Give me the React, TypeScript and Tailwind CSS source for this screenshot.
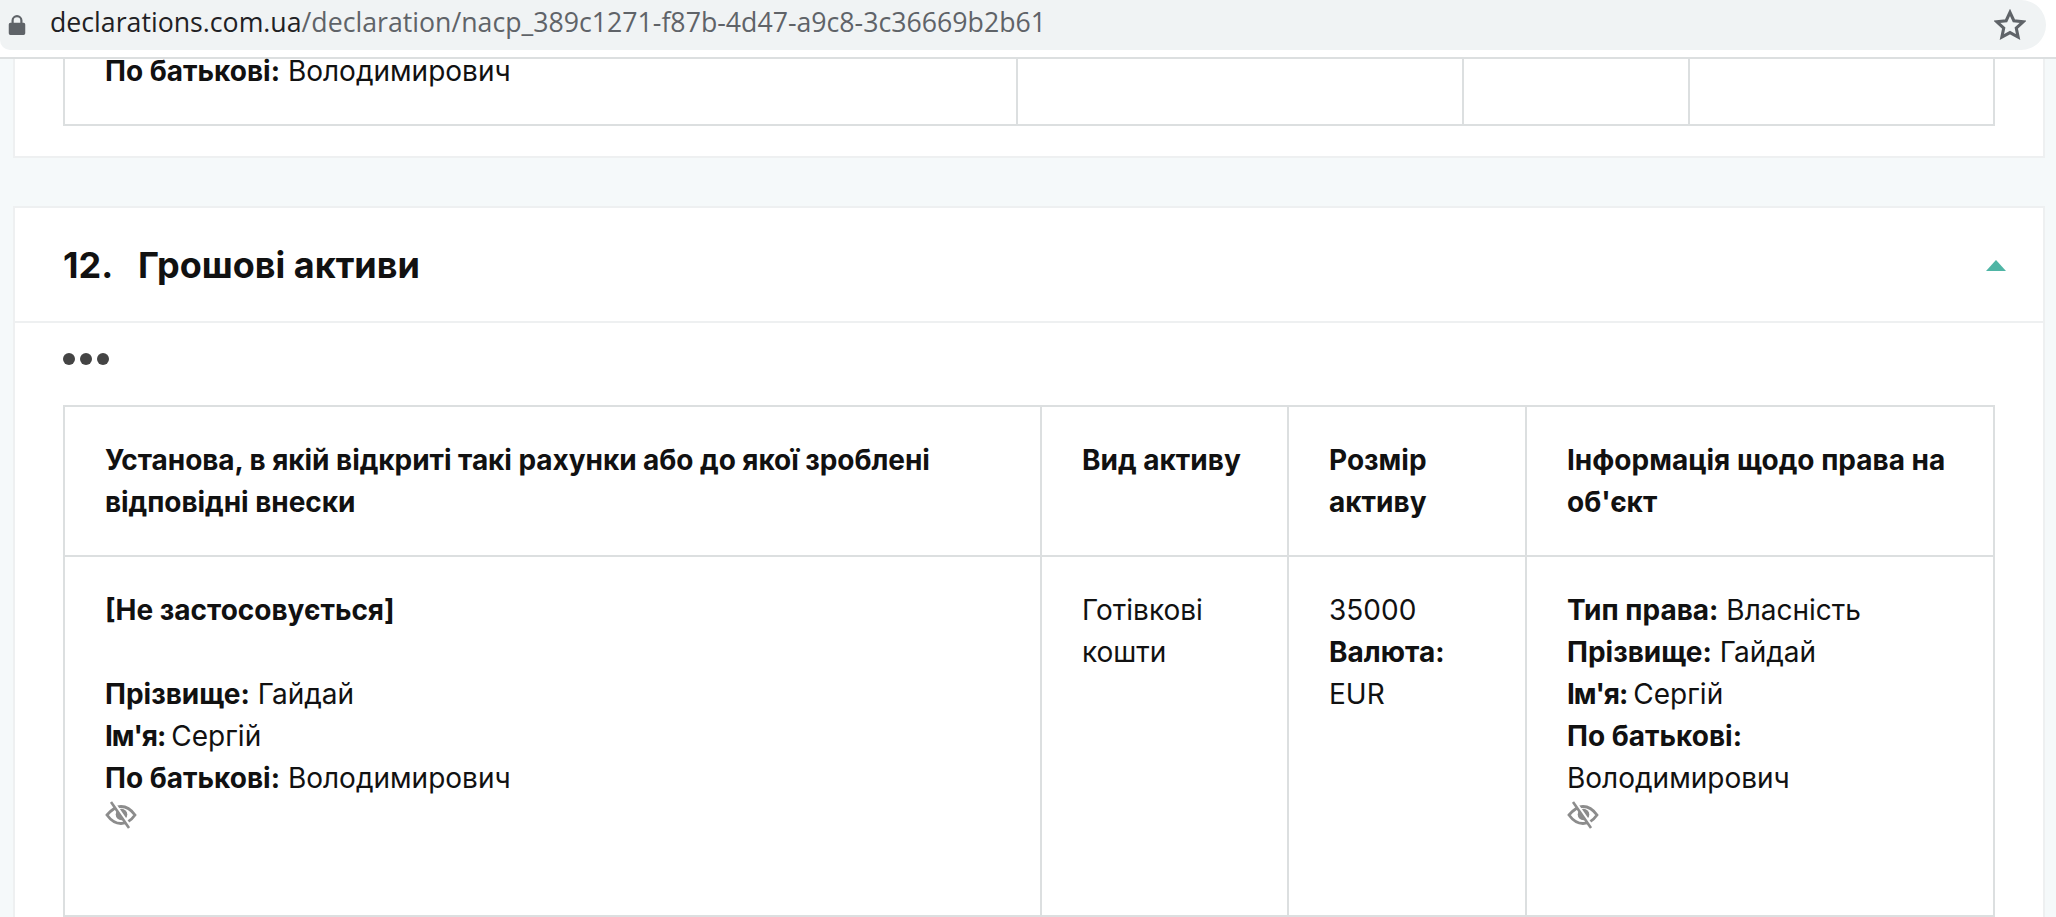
import React from "react";

const Eye = () => (
  <svg viewBox="0 0 32 28" className="block mt-[2px] w-[32px] h-[28px] text-[#8c8c8c]" fill="none" stroke="currentColor">
    <path d="M2 14 C8 7 13 5.500 16 5.500 C20 5.500 25 7 30 14 C25 21 20 22.500 16 22.500 C12 22.500 7 21 2 14 Z" strokeWidth="2.800" />
    <circle cx="16.500" cy="13.500" r="5.800" fill="currentColor" stroke="none" />
    <path d="M8 1 L26 27" strokeWidth="3.200" stroke="#ffffff" />
    <path d="M6 1 L24 27" strokeWidth="2.600" />
  </svg>
);

const Pair = ({ k, v }: { k: string; v: string }) => (
  <div><b className="font-bold">{k}</b> {v}</div>
);

const Name = () => (
  <div><b className="font-bold tracking-[-1px]">Ім'я:</b> <span className="-ml-[2px]">Сергій</span></div>
);

const cell = "border-2 border-[#dcdfe0] align-top";

export default function App() {
  return (
    <div className="h-[917px] w-[2056px] overflow-hidden bg-[#f5f9fa] text-[#111111] font-['Inter',sans-serif] text-[28px] leading-[42px]">
      <div className="h-[59px] bg-white border-b-2 border-[#dcdfe0]">
        <div className="h-[50px] w-[2046px] bg-[#f0f3f4] rounded-r-[25px] rounded-bl-[10px] flex items-center pl-[8px] pr-[20px]">
          <svg viewBox="0 0 16 20" className="w-[18px] h-[22px] text-[#5f6368]" fill="currentColor">
            <path d="M3 8V6a5 5 0 0 1 10 0v2h1a1.500 1.500 0 0 1 1.500 1.500v8A1.500 1.500 0 0 1 14 19H2a1.500 1.500 0 0 1-1.500-1.500v-8A1.500 1.500 0 0 1 2 8h1Zm2 0h6V6a3 3 0 0 0-6 0v2Z" />
          </svg>
          <div className="ml-[24px] flex-1 -mt-[6px] font-['Open_Sans',sans-serif] text-[26.7px] leading-[50px] text-[#5f6368]">
            <span className="text-[#1f2124]">declarations.com.ua</span>/declaration/nacp_389c1271-f87b-4d47-a9c8-3c36669b2b61
          </div>
          <svg viewBox="0 0 24 24" className="w-[32px] h-[32px]" fill="none" stroke="#5f6368" strokeWidth="2.300">
            <path d="M12 2.500l2.900 6.300 6.900.8-5.100 4.700 1.400 6.800-6.100-3.400-6.100 3.400 1.400-6.800-5.100-4.700 6.900-.8z" />
          </svg>
        </div>
      </div>

      <div className="ml-[13px] w-[2032px] h-[99px] bg-white border-x-2 border-b-2 border-[#eef0f1] px-[48px]">
        <table className="w-[1932px] table-fixed border-collapse">
          <colgroup><col className="w-[953px]" /><col className="w-[446px]" /><col className="w-[226px]" /><col /></colgroup>
          <tbody>
            <tr className="h-[66px]">
              <td className={`${cell} border-t-0 pl-[40px] align-top`}><div className="-mt-[9px]"><Pair k="По батькові:" v="Володимирович" /></div></td>
              <td className={`${cell} border-t-0`} /><td className={`${cell} border-t-0`} /><td className={`${cell} border-t-0`} />
            </tr>
          </tbody>
        </table>
      </div>

      <div className="ml-[13px] mt-[48px] w-[2032px] bg-white border-2 border-[#eef0f1]">
        <div className="h-[115px] border-b-2 border-[#eef0f1] pl-[48px] pr-[37px] flex items-center justify-between">
          <div className="flex text-[36px] font-bold mt-[1px]">
            <span className="w-[75px]">12.</span><span>Грошові активи</span>
          </div>
          <div className="w-0 h-0 mt-[1px] border-x-[10px] border-x-transparent border-b-[11px] border-b-[#4fb5a5]" />
        </div>
        <div className="px-[48px]">
          <div className="h-[82px] flex items-start gap-[5px] pt-[30px]">
            <span className="size-[12px] rounded-full bg-[#444444]" /><span className="size-[12px] rounded-full bg-[#444444]" /><span className="size-[12px] rounded-full bg-[#444444]" />
          </div>
          <table className="w-[1932px] table-fixed border-collapse">
            <colgroup><col className="w-[977px]" /><col className="w-[247px]" /><col className="w-[238px]" /><col /></colgroup>
            <thead>
              <tr className="h-[150px]">
                <th className={`${cell} text-left font-bold tracking-[-0.06px] px-[40px] pt-[32px]`}>Установа, в якій відкриті такі рахунки або до якої зроблені відповідні внески</th>
                <th className={`${cell} text-left font-bold px-[40px] pt-[32px]`}>Вид активу</th>
                <th className={`${cell} text-left font-bold px-[40px] pt-[32px]`}>Розмір активу</th>
                <th className={`${cell} text-left font-bold px-[40px] pt-[32px]`}>Інформація щодо права на об'єкт</th>
              </tr>
            </thead>
            <tbody>
              <tr className="h-[360px]">
                <td className={`${cell} px-[40px] pt-[32px]`}>
                  <b>[Не застосовується]</b>
                  <div className="h-[42px]" />
                  <Pair k="Прізвище:" v="Гайдай" />
                  <Name />
                  <Pair k="По батькові:" v="Володимирович" />
                  <Eye />
                </td>
                <td className={`${cell} px-[40px] pt-[32px]`}>Готівкові кошти</td>
                <td className={`${cell} px-[40px] pt-[32px]`}>35000<br /><b>Валюта:</b> EUR</td>
                <td className={`${cell} px-[40px] pt-[32px]`}>
                  <Pair k="Тип права:" v="Власність" />
                  <Pair k="Прізвище:" v="Гайдай" />
                  <Name />
                  <Pair k="По батькові:" v="Володимирович" />
                  <Eye />
                </td>
              </tr>
            </tbody>
          </table>
        </div>
      </div>
    </div>
  );
}
